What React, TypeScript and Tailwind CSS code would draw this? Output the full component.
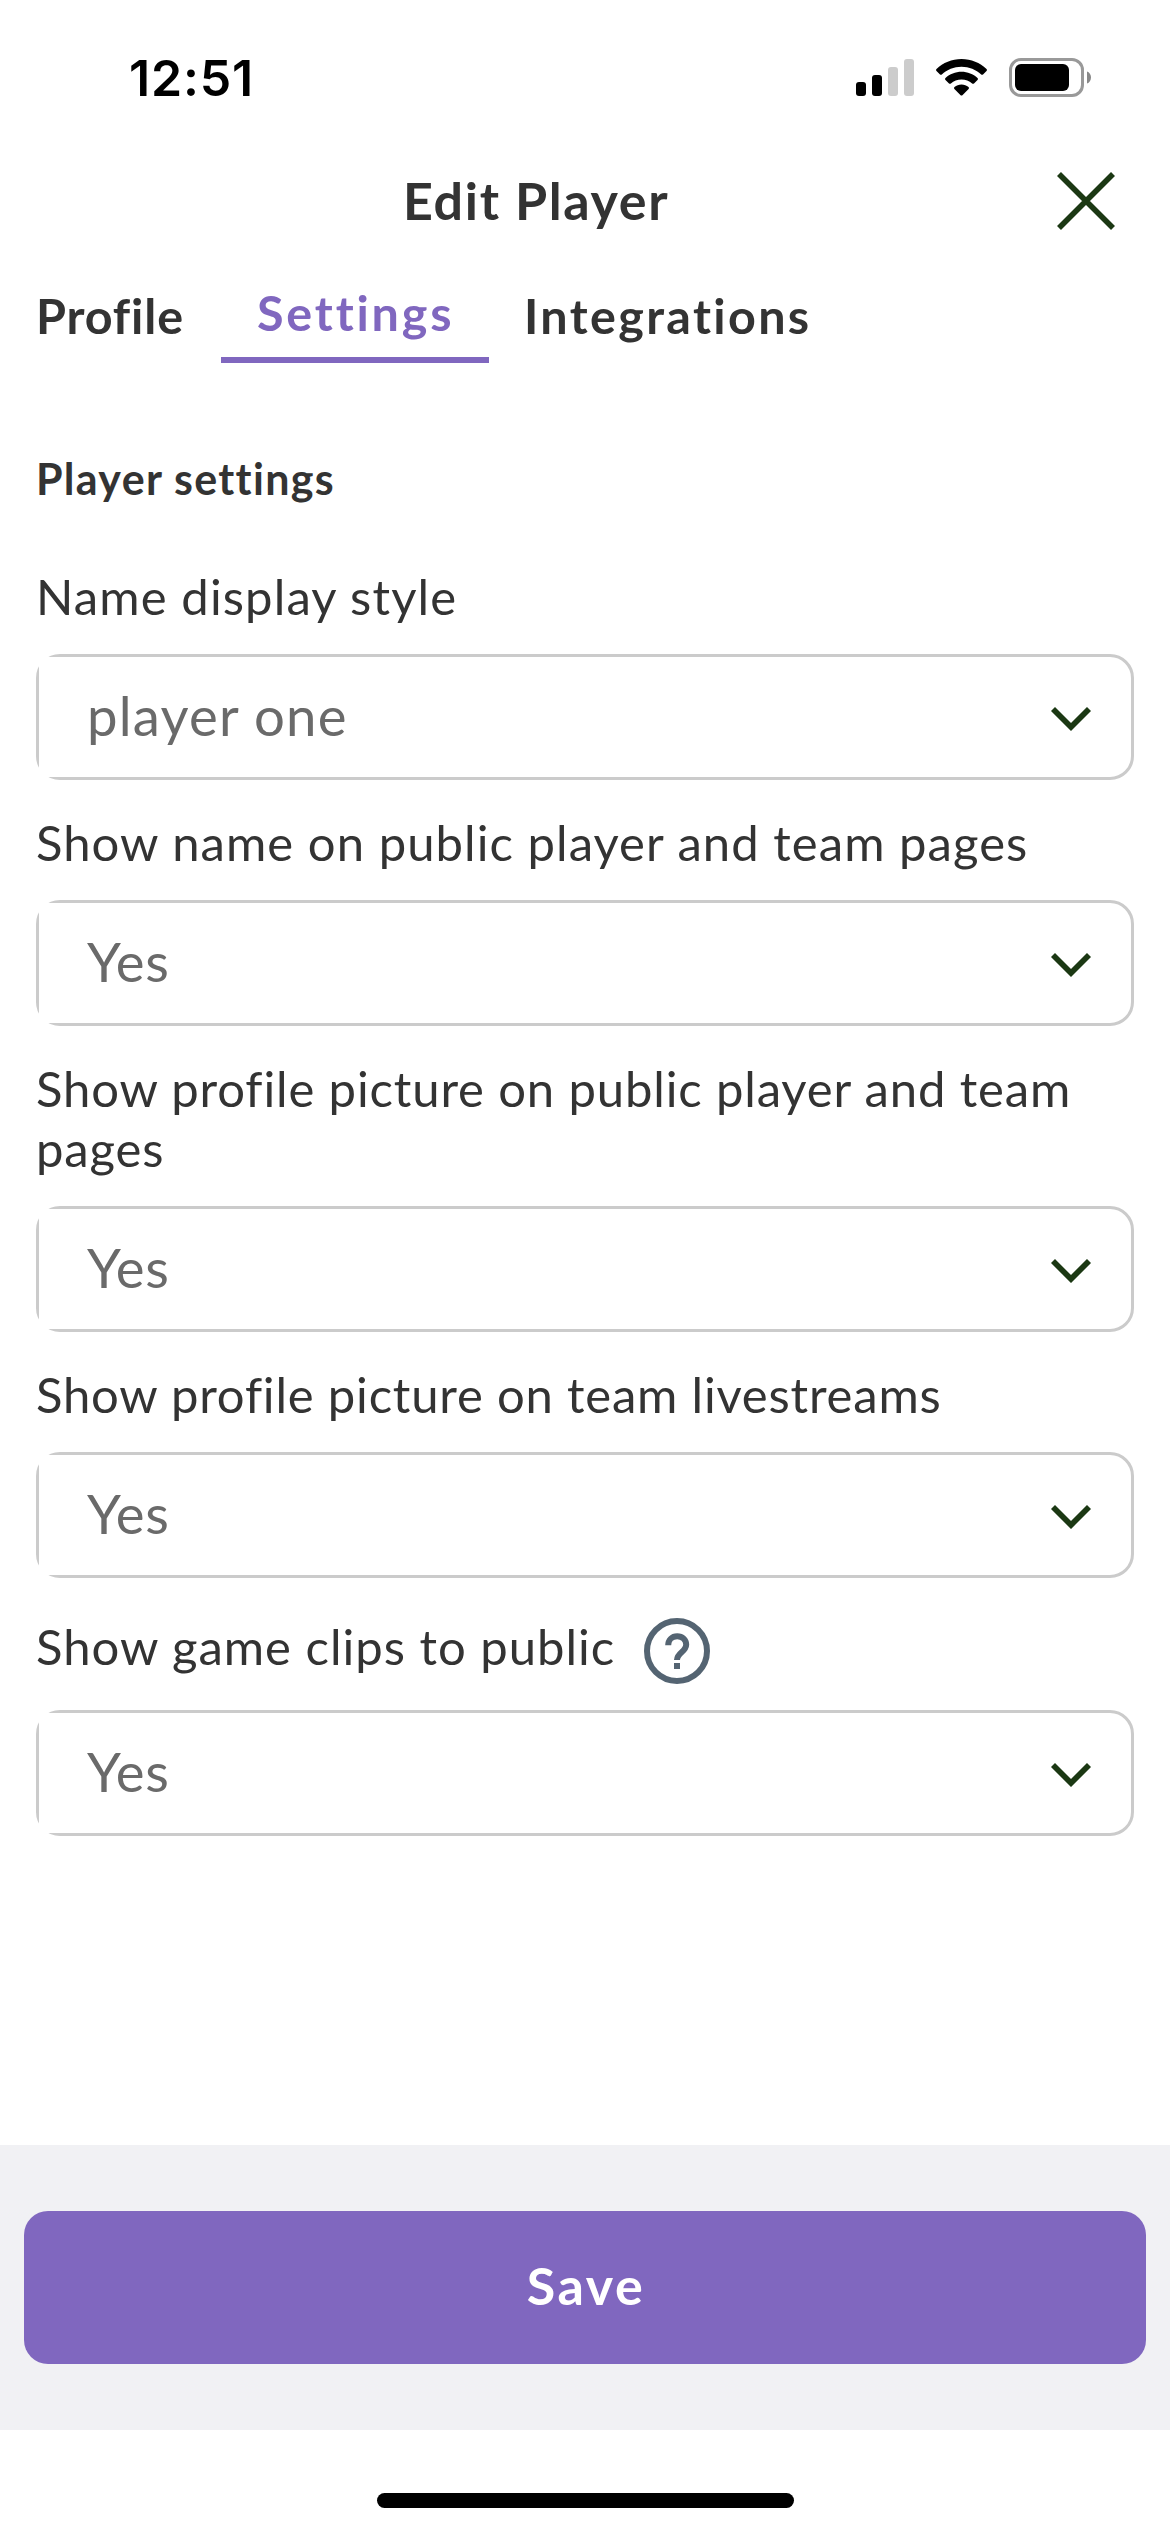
import type { ReactNode } from "react";

function SignalIcon() {
  return (
    <svg width="58" height="37" viewBox="0 0 58 37">
      <rect x="0" y="23" width="10" height="14" rx="3" fill="#000" />
      <rect x="16" y="16" width="10" height="21" rx="3" fill="#000" />
      <rect x="32" y="8" width="10" height="29" rx="3" fill="#ccc" />
      <rect x="48" y="0" width="10" height="37" rx="3" fill="#ccc" />
    </svg>
  );
}

function WifiIcon() {
  return (
    <svg width="51" height="37" viewBox="0 0 51 37" fill="#000">
      <path d="M25.5 0C35.2 0 44 3.8 50.5 10c.6.6.6 1.300 0 1.900l-3.500 3.500c-.5.5-1.300.5-1.800 0C40 10.600 33.100 7.700 25.500 7.700S11 10.600 5.800 15.400c-.5.5-1.300.5-1.800 0L.5 11.900c-.6-.6-.6-1.300 0-1.900C7 3.800 15.800 0 25.500 0Z" />
      <path d="M25.500 12.800c6.100 0 11.700 2.300 16 6.200.6.5.6 1.300 0 1.900l-3.500 3.500c-.5.5-1.300.5-1.900.1-2.800-2.500-6.500-4-10.600-4s-7.800 1.500-10.600 4c-.6.4-1.400.4-1.900-.1l-3.500-3.500c-.6-.6-.6-1.400 0-1.900 4.300-3.900 9.900-6.200 16-6.200Z" />
      <path d="M25.500 25.500c2.700 0 5.100 1 7 2.600.6.500.6 1.300.1 1.800l-6.200 6.300c-.5.5-1.300.5-1.800 0l-6.200-6.300c-.5-.5-.5-1.300.1-1.800 1.900-1.600 4.300-2.600 7-2.600Z" />
    </svg>
  );
}

function BatteryIcon() {
  return (
    <svg width="82" height="39" viewBox="0 0 82 39">
      <rect x="1.500" y="1.500" width="72" height="36" rx="10.500" fill="none" stroke="#999" strokeWidth="3" />
      <rect x="6" y="6" width="54" height="27" rx="6" fill="#000" />
      <path d="M78 13.500c2.400.8 4 3.100 4 6s-1.600 5.200-4 6Z" fill="#888" />
    </svg>
  );
}

function CloseIcon() {
  return (
    <svg width="58" height="58" viewBox="0 0 58 58" stroke="#1b3813" strokeWidth="5.600">
      <path d="M2 2L56 56M56 2L2 56" />
    </svg>
  );
}

function ChevronIcon() {
  return (
    <svg width="40" height="24" viewBox="0 0 40 24" fill="none" stroke="#1b3813" strokeWidth="5.660">
      <path d="M2 2L20 20L38 2" />
    </svg>
  );
}

function HelpIcon() {
  return (
    <svg width="66" height="66" viewBox="0 0 66 66" fill="none" stroke="#546472" strokeWidth="6">
      <circle cx="33" cy="33" r="30" />
      <path d="M24.200 27.300C24.200 22 28 18.200 33.200 18.200S42.200 22 42.200 26.600C42.200 34 33 34.500 33 42" />
      <rect x="30" y="45" width="6" height="6" fill="#546472" stroke="none" />
    </svg>
  );
}

function Field({ label, value, help, spacing }: { label: ReactNode; value: string; help?: boolean; spacing: string }) {
  return (
    <div className="pt-8">
      <div className={help ? "flex h-[72px] items-center" : "min-h-[60px]"}>
        <p className={`text-[49px] leading-[60px] whitespace-nowrap text-[#333] ${spacing}`}>{label}</p>
        {help && (
          <button className="ml-[29px] translate-y-[5px]" aria-label="Help">
            <HelpIcon />
          </button>
        )}
      </div>
      <div className="mt-7 h-[126px] rounded-[24px] border-[3px] border-[#cbcbcb]">
        <div className="mr-[24px] flex h-full items-center justify-between bg-white pl-12">
          <span className={value === "Yes" ? "pb-[5px] text-[54.5px] leading-[60px] tracking-[0.7px] text-[#6a6a6a]" : "pb-[5px] text-[54.5px] leading-[60px] tracking-[1.2px] text-[#6a6a6a]"}>
            {value}
          </span>
          <span className="mr-[16px] pt-[3px]">
            <ChevronIcon />
          </span>
        </div>
      </div>
    </div>
  );
}

export default function App() {
  return (
    <div className="flex h-[2532px] w-[1170px] flex-col overflow-hidden bg-white font-['Lato',sans-serif] text-[#333]">
      <div className="flex h-[141px] shrink-0 items-start pt-12 pr-[79px] pl-[129px]">
        <span className="font-['Inter',sans-serif] text-[50px] leading-[60px] font-semibold tracking-[0.8px] text-black">12:51</span>
        <div className="ml-auto flex items-center pt-[10px]">
          <SignalIcon />
          <span className="ml-[22px]"><WifiIcon /></span>
          <span className="ml-[22px]"><BatteryIcon /></span>
        </div>
      </div>

      <header className="flex h-[120px] shrink-0 items-center justify-between pr-[55px] pl-[403px]">
        <h1 className="pb-[3px] text-[52px] leading-[60px] font-bold tracking-[1.650px]">Edit Player</h1>
        <button aria-label="Close"><CloseIcon /></button>
      </header>

      <nav className="flex h-[102px] shrink-0 items-start pt-[21px] pl-9 text-[48.5px] leading-[60px] font-bold">
        <span className="mt-[3px] w-[185px] tracking-[0.850px]">Profile</span>
        <span className="h-[81px] w-[268px] border-b-[6px] border-[#8067bf] pl-9 tracking-[2.800px] text-[#8067bf]">Settings</span>
        <span className="mt-[3px] ml-[35px] tracking-[2.350px]">Integrations</span>
      </nav>

      <main className="flex-1 px-9 pt-[86px]">
        <h2 className="mb-[25px] text-[43px] leading-[60px] font-bold tracking-[1.300px]">Player settings</h2>
        <Field label="Name display style" value="player one" spacing="tracking-[1.12px]" />
        <Field label="Show name on public player and team pages" value="Yes" spacing="tracking-[1.05px]" />
        <Field
          label={<>Show profile picture on public player and team<br />pages</>}
          value="Yes"
          spacing="tracking-[0.86px]"
        />
        <Field label="Show profile picture on team livestreams" value="Yes" spacing="tracking-[0.8px]" />
        <Field label="Show game clips to public" value="Yes" help spacing="tracking-[1px]" />
      </main>

      <footer className="h-[285px] shrink-0 bg-[#f1f1f4] px-6 py-[66px]">
        <button className="flex h-[153px] w-full items-center justify-center rounded-[24px] bg-[#8067bf] pb-[6px] pl-[2px] text-[52px] font-bold tracking-[2.600px] text-white">
          Save
        </button>
      </footer>
      <div className="flex h-[102px] shrink-0 justify-center pt-[63px]">
        <div className="h-[15px] w-[417px] rounded-full bg-black" />
      </div>
    </div>
  );
}
